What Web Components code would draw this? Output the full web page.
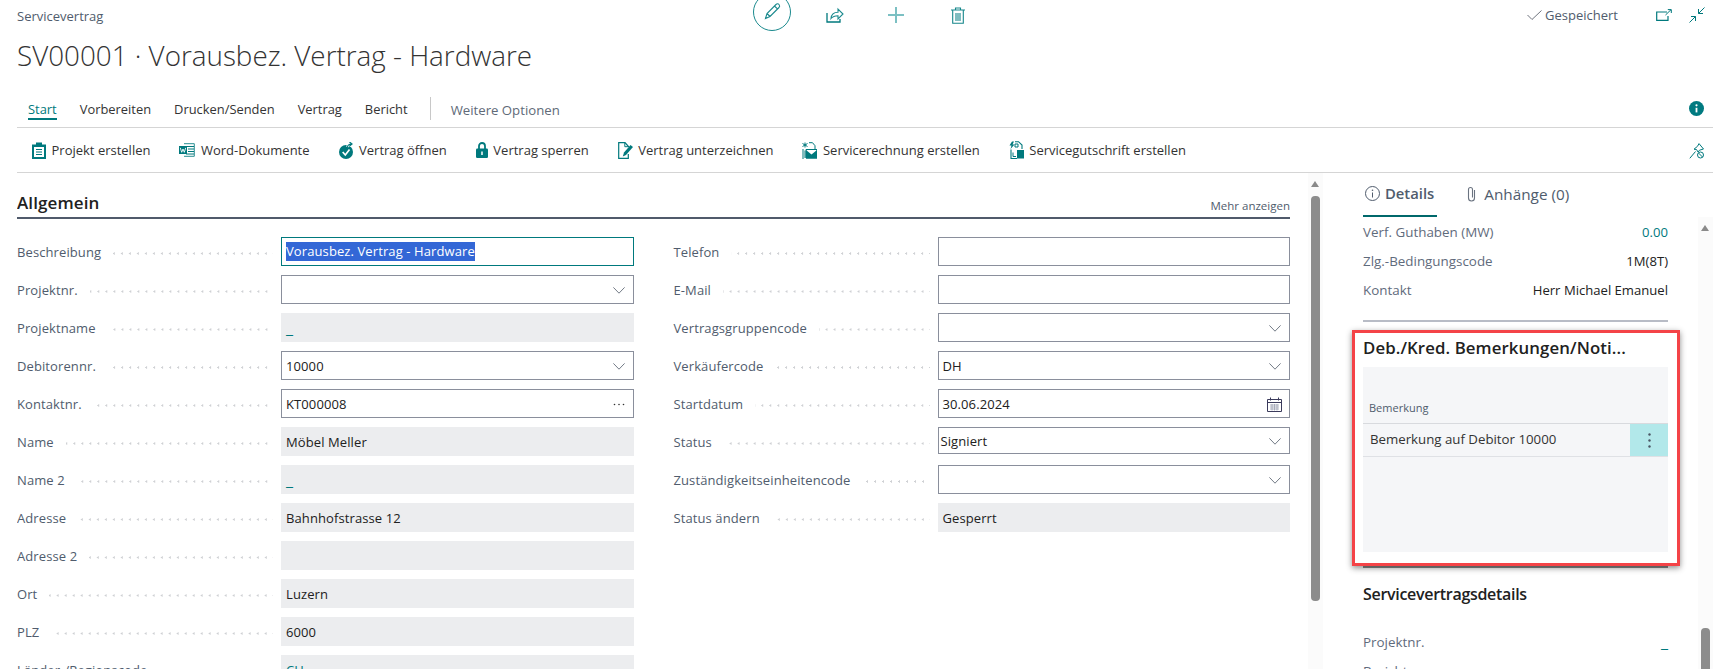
<!DOCTYPE html>
<html lang="de"><head><meta charset="utf-8"><title>Servicevertrag</title>
<style>
html,body{margin:0;height:100%;overflow:hidden;background:#fff}
body{font-family:"Open Sans","Liberation Sans",sans-serif;font-size:13px;color:#212121}
</style></head><body>
<sv-app>
  <sv-header slot="header" caption="Servicevertrag" heading="SV00001 · Vorausbez. Vertrag - Hardware"></sv-header>
  <sv-tabs slot="tabs">
    <sv-tab active>Start</sv-tab><sv-tab>Vorbereiten</sv-tab><sv-tab>Drucken/Senden</sv-tab><sv-tab>Vertrag</sv-tab><sv-tab>Bericht</sv-tab><sv-tab more>Weitere Optionen</sv-tab>
  </sv-tabs>
  <sv-actionbar slot="actions">
    <sv-action icon="clipboard">Projekt erstellen</sv-action>
    <sv-action icon="word">Word-Dokumente</sv-action>
    <sv-action icon="open">Vertrag öffnen</sv-action>
    <sv-action icon="lock">Vertrag sperren</sv-action>
    <sv-action icon="sign">Vertrag unterzeichnen</sv-action>
    <sv-action icon="invoice">Servicerechnung erstellen</sv-action>
    <sv-action icon="credit">Servicegutschrift erstellen</sv-action>
  </sv-actionbar>
  <sv-section slot="main" heading="Allgemein" more="Mehr anzeigen">
    <sv-col>
      <sv-field label="Beschreibung" value="Vorausbez. Vertrag - Hardware" kind="focus"></sv-field>
      <sv-field label="Projektnr." kind="select"></sv-field>
      <sv-field label="Projektname" value="_" kind="readonly" link></sv-field>
      <sv-field label="Debitorennr." value="10000" kind="select"></sv-field>
      <sv-field label="Kontaktnr." value="KT000008" kind="lookup"></sv-field>
      <sv-field label="Name" value="Möbel Meller" kind="readonly"></sv-field>
      <sv-field label="Name 2" value="_" kind="readonly" link></sv-field>
      <sv-field label="Adresse" value="Bahnhofstrasse 12" kind="readonly"></sv-field>
      <sv-field label="Adresse 2" kind="readonly"></sv-field>
      <sv-field label="Ort" value="Luzern" kind="readonly"></sv-field>
      <sv-field label="PLZ" value="6000" kind="readonly"></sv-field>
      <sv-field label="Länder-/Regionscode" value="CH" kind="readonly" link></sv-field>
    </sv-col>
    <sv-col>
      <sv-field label="Telefon" kind="input"></sv-field>
      <sv-field label="E-Mail" kind="input"></sv-field>
      <sv-field label="Vertragsgruppencode" kind="select"></sv-field>
      <sv-field label="Verkäufercode" value="DH" kind="select"></sv-field>
      <sv-field label="Startdatum" value="30.06.2024" kind="date"></sv-field>
      <sv-field label="Status" value="Signiert" kind="select" tight></sv-field>
      <sv-field label="Zuständigkeitseinheitencode" kind="select"></sv-field>
      <sv-field label="Status ändern" value="Gesperrt" kind="readonly"></sv-field>
    </sv-col>
  </sv-section>
  <sv-scrollbar slot="mainscroll" gap="9" len="405"></sv-scrollbar>
  <sv-sidebar slot="side">
    <sv-fact label="Verf. Guthaben (MW)" value="0.00" link></sv-fact>
    <sv-fact label="Zlg.-Bedingungscode" value="1M(8T)"></sv-fact>
    <sv-fact label="Kontakt" value="Herr Michael Emanuel"></sv-fact>
    <sv-notes slot="notes" heading="Deb./Kred. Bemerkungen/Noti..." column="Bemerkung" note="Bemerkung auf Debitor 10000"></sv-notes>
    <sv-fact slot="details" label="Projektnr." value="_" link></sv-fact>
    <sv-fact slot="details" label="Bericht" value=""></sv-fact>
  </sv-sidebar>
  <sv-scrollbar slot="sidescroll" inset gap="397" len="60"></sv-scrollbar>
</sv-app>
<script>
const T='#00797d';
const ICONS={
 pencil:[20,20,`<path d="M3.5 16.5 5 11.5 14 2.5c1-1 2.3-.8 3 0s.9 2 0 3L8 14.5zM5 11.5 8 14.5M12.5 4l3.2 3.2" fill="none" stroke="#1b8a8e" stroke-width="1.1"/>`],
 share:[18,16,`<path d="M1 6v9h13v-3" fill="none" stroke="${T}" stroke-width="1.3"/><path d="M5 11.5c.3-4 3-6.3 7-6.3V2l5 5-5 5V8.700c-3 0-5.400.8-7 2.800z" fill="none" stroke="#1b8a8e" stroke-width="1.1"/>`],
 plus:[16,16,`<path d="M8 0v16M0 8h16" stroke="#7cc0c3" stroke-width="2" fill="none"/>`],
 trash:[14,17,`<path d="M0 3h14M4.5 3V1h5v2M1.700 3v13.300h10.600V3M5 6v8M7 6v8M9 6v8" fill="none" stroke="#16878b" stroke-width="1.1"/>`],
 check:[15,10,`<path d="M.5 5 5 9.5 14.5.5" fill="none" stroke="#70757f" stroke-width="1"/>`],
 window:[16,12,`<path d="M11 3H.7v8.300H12V7" fill="none" stroke="${T}" stroke-width="1.2"/><path d="M9.500 6 15 .7M11.800.6H15.300V4" fill="none" stroke="${T}"/>`],
 collapse:[16,16,`<path d="M15.500.5 9.500 6.500M9.500 2v4.500H14M.5 15.500l6-6M2 9.500h4.500V14" fill="none" stroke="${T}" stroke-width="1"/>`],
 info:[15,15,`<circle cx="7.5" cy="7.5" r="7.5" fill="#007a80"/><circle cx="7.5" cy="4.300" r="1.1" fill="#fff"/><path d="M7.500 6.800v4.600" stroke="#fff" stroke-width="1.8"/>`],
 pin:[16,16,`<path d="M10 .6 14.500 6 10.500 7.200 9 9 7.500 6.500 5 6.200 8.500 3.300zM6.500 8.500.8 15.300" fill="none" stroke="${T}"/><circle cx="11.5" cy="12" r="3" fill="none" stroke="${T}"/><path d="M9.500 10l4 4" stroke="${T}"/>`],
 clipboard:[14,17,`<path d="M0 2.500h4V.5h6v2h4V17H0z" fill="${T}"/><path d="M2 5h10v10H2z" fill="#fff"/><path d="M4 7.500h6M4 10h6M4 12.500h6" stroke="${T}" stroke-width="1.2"/>`],
 word:[16,14,`<path d="M5 .7h10.300v12.600H5" fill="none" stroke="#2b8f93"/><path d="M7 3.500h8M9 6h6M9 8.500h6M7 11h8" stroke="${T}"/><rect x="0" y="3" width="8" height="8" fill="${T}"/><path d="M1.300 4.800 2.700 9.300 4 6 5.300 9.300 6.700 4.800" fill="none" stroke="#fff" stroke-width=".9"/>`],
 open:[15,17,`<circle cx="7" cy="10" r="7" fill="${T}"/><path d="M3.700 10 6.300 13 10.500 7.500" fill="none" stroke="#fff" stroke-width="1.7"/><path d="M8.500 5c.3-2.200 1.800-3 4-3M10.500 0 13 2l-2.500 2" fill="none" stroke="#fff" stroke-width="2.600"/><path d="M8.500 5c.3-2.200 1.800-3 4-3M10.500 0 13 2l-2.500 2" fill="none" stroke="${T}" stroke-width="1.200"/>`],
 lock:[12,16,`<path d="M3 7V4a3 3 0 0 1 6 0v3" fill="none" stroke="${T}" stroke-width="1.8"/><rect x="0" y="6.500" width="12" height="9.500" rx="1.2" fill="${T}"/><path d="M6 9.500v3.500" stroke="#fff" stroke-width="1.5"/>`],
 sign:[15,17,`<path d="M10.500 5V4.500L7 .7H.7v15.600h9.600V12" fill="none" stroke="${T}" stroke-width="1.2"/><path d="M6.800.7v4h3.700" fill="none" stroke="${T}"/><path d="M4.800 14.500 6 10.500 12.500 3l2.500 2-7 8z" fill="${T}"/>`],
 invoice:[15,17,`<path d="M3 .5v5M.5 1.500l5 3M5.500 1.500l-5 3" stroke="${T}"/><path d="M7 .7h3.500l2.500 3V7M1 7v10M3 8.500V16" fill="none" stroke="${T}"/><path d="M4 7.500h11V16H4z" fill="#fff" stroke="${T}"/><path d="M4 8l5.500 4.500L15 8v8.500H4z" fill="${T}"/>`],
 credit:[15,18,`<path d="M3 .5 .5 4.500h2L1.500 8 5.500 3.500h-2L5 .5z" fill="${T}"/><path d="M6 .7h3.500L13 4v4M2 8.500v9h6" fill="none" stroke="${T}" stroke-width="1.1"/><path d="M6 3h3v3H6z" fill="none" stroke="${T}"/><rect x="8" y="9" width="7" height="8.500" fill="${T}"/><path d="M4 11.500v4h3" fill="none" stroke="${T}"/>`],
 chevron:[12,7,`<path d="M.4.4 6 6.200 11.600.4" fill="none" stroke="#737b86" stroke-width="1"/>`],
 more:[12,3,`<circle cx="1.5" cy="1.5" r=".8" fill="#333"/><circle cx="6" cy="1.5" r=".8" fill="#333"/><circle cx="10.5" cy="1.5" r=".8" fill="#333"/>`],
 calendar:[15,15,`<path d="M.5 2.500h14v12H.5zM.5 5.500h14M3.500.5v3M11.500.5v3" fill="none" stroke="#3b3b5c"/><path d="M3 8h9M3 10h9M3 12h9M5 7v6.500M7.500 7v6.500M10 7v6.500" stroke="#9aa0b0" stroke-width=".8"/>`],
 infoline:[15,15,`<circle cx="7.5" cy="7.5" r="7" fill="none" stroke="#505c6d"/><path d="M7.500 6.500v5" stroke="#505c6d"/><circle cx="7.5" cy="4.300" r=".8" fill="#505c6d"/>`],
 clip:[9,16,`<path d="M7.500 4v8a3 3 0 0 1-6 0V3.500a2 2 0 0 1 4 0V11.500" fill="none" stroke="#6a7380" stroke-width="1.1"/>`],
 dots:[3,15,`<circle cx="1.5" cy="1.5" r="1.2" fill="#4a5563"/><circle cx="1.5" cy="7.5" r="1.2" fill="#4a5563"/><circle cx="1.5" cy="13.5" r="1.2" fill="#4a5563"/>`]
};
function def(name,css,html){
  customElements.define(name,class extends HTMLElement{
    constructor(){super();this.attachShadow({mode:'open'});}
    connectedCallback(){
      const a=n=>{const v=this.getAttribute(n);return v==null?'':v;};
      this.shadowRoot.innerHTML=`<style>${css}</style>`+(typeof html==='function'?html(a,this):html);
    }
  });
}
def('sv-icon',':host{display:inline-flex;flex:none;line-height:0}svg{display:block}',(a)=>{
  const i=ICONS[a('name')];return `<svg width="${i[0]}" height="${i[1]}" viewBox="0 0 ${i[0]} ${i[1]}">${i[2]}</svg>`;
});
def('sv-app',`:host{display:flex;flex-direction:column;height:669px;overflow:hidden}
.body{display:flex;flex:1;min-height:0;padding-right:21px}`,
`<slot name="header"></slot><slot name="tabs"></slot><slot name="actions"></slot>
<div class="body"><slot name="main"></slot><slot name="mainscroll"></slot><slot name="side"></slot><slot name="sidescroll"></slot></div>`);
def('sv-header',`:host{display:block;height:93px;padding-left:17px}
.top{display:flex;align-items:center;height:33px}
.cap{width:736px;font-size:13px;color:#505c6d;margin-top:-2px}
.circle{width:38px;height:38px;box-sizing:border-box;border:1px solid #1b8a8e;border-radius:50%;margin-top:-10px;display:flex;align-items:center;justify-content:center}
.share{margin-left:35px;margin-top:-4px}.plus{margin-left:44px;margin-top:-3px}.trash{margin-left:47px;margin-top:-3px}
.saved{margin-left:auto;display:flex;align-items:center;gap:3px;font-size:13px;color:#505c6d;margin-right:38px;margin-top:-3px}
.win{margin-right:17px;margin-top:-4px}.col{margin-right:29px;margin-top:-4px}
h1{margin:0;height:48px;line-height:45px;font-size:27.8px;font-weight:300;color:#333;white-space:nowrap}`,
(a)=>`<div class="top"><span class="cap">${a('caption')}</span>
<span class="circle"><sv-icon name="pencil"></sv-icon></span>
<sv-icon class="share" name="share"></sv-icon><sv-icon class="plus" name="plus"></sv-icon><sv-icon class="trash" name="trash"></sv-icon>
<span class="saved"><sv-icon name="check"></sv-icon>Gespeichert</span><sv-icon class="win" name="window"></sv-icon><sv-icon class="col" name="collapse"></sv-icon></div>
<h1>${a('heading')}</h1>`);
def('sv-tabs',`:host{display:flex;align-items:flex-start;gap:23px;height:34px;margin:0 21px 0 17px;padding:0 17px 0 11px;border-bottom:1px solid #d5d5d5;position:relative}
.i{position:absolute;right:9px;top:8px}`,`<slot></slot><sv-icon class="i" name="info"></sv-icon>`);
def('sv-tab',`:host{display:flex;align-items:center;height:23px;margin-top:4px;padding-top:3px;white-space:nowrap;color:#333;font-size:12.9px;box-sizing:border-box;border-bottom:2px solid transparent}
:host([active]){color:${T};border-bottom-color:${T}}
:host([more]){color:#606a78;font-size:13.2px;border-left:1px solid #c8c8c8;border-bottom:0;padding-left:20px;margin-left:-1px}`,`<slot></slot>`);
def('sv-actionbar',`:host{display:flex;align-items:center;gap:29px;height:44px;margin:0 21px 0 17px;padding:0 8px 0 15px;border-bottom:1px solid #d5d5d5;position:relative}
.p{position:absolute;right:8px;top:15px}`,`<slot></slot><sv-icon class="p" name="pin"></sv-icon>`);
def('sv-action',`:host{display:flex;align-items:center;gap:5.5px;white-space:nowrap;color:#333;font-size:13px}`,
(a)=>`<sv-icon name="${a('icon')}"></sv-icon><slot></slot>`);
def('sv-section',`:host{display:block;width:1273px;margin-left:17px;margin-right:18px;flex:none;height:100%;overflow:hidden}
.h{display:flex;align-items:center;justify-content:space-between;height:44px;border-bottom:2px solid #505a6b;margin-bottom:18px}
h2{margin:16px 0 0;font-size:17px;font-weight:600;color:#212121;letter-spacing:.1px;line-height:24px}
.m{font-size:11.5px;color:#505c6d;margin-top:20px}
.g{display:grid;grid-template-columns:1fr 1fr;gap:40px}`,
(a)=>`<div class="h"><h2>${a('heading')}</h2><span class="m">${a('more')}</span></div><div class="g"><slot></slot></div>`);
def('sv-col',`:host{display:flex;flex-direction:column;gap:9px}`,`<slot></slot>`);
def('sv-field',`:host{display:grid;grid-template-columns:264px 1fr;height:29px;font-size:13px;letter-spacing:.1px}
.l{display:flex;align-items:center;color:#505c6d;min-width:0;padding:0 8px 0 0}
.l span{white-space:nowrap}
.d{flex:1;height:3px;margin:3px 0 0 12px;background:radial-gradient(circle at 1.2px 1.5px,#cfd1d4 1px,transparent 1.2px) right/8px 3px repeat-x}
.v{display:flex;align-items:center;justify-content:space-between;box-sizing:border-box;padding:1px 8px 0 4px;border:1px solid #8a8f9c;color:#212121;white-space:nowrap}
.focus{border-color:${T}}.readonly{background:#ecedef;border-color:#ecedef}
.sel{background:#3367d6;color:#fff;line-height:19px;margin-top:-1px}
.link{color:${T}}.big{font-size:16px;line-height:18px}.tight{height:27px;margin-bottom:2px;padding-left:2px}`,
(a,el)=>{
 const k=a('kind');const ic=k==='select'?'<sv-icon name="chevron"></sv-icon>':k==='lookup'?'<sv-icon name="more"></sv-icon>':k==='date'?'<sv-icon name="calendar" style="margin-right:-1px"></sv-icon>':'';
 const val=a('value');
 const cl=(el.hasAttribute('link')?'link ':'')+(val==='_'?'big':'');
 const t=k==='focus'?`<span class="sel">${val}</span>`:`<span class="${cl}">${val}</span>`;
 return `<div class="l"><span>${a('label')}</span><i class="d"></i></div><div class="v ${k} ${el.hasAttribute('tight')?'tight':''}">${t}${ic}</div>`;
});
def('sv-scrollbar',`:host{display:block;width:15px;flex:none;background:#fbfbfb;box-sizing:border-box;padding:8px 3px 0}
:host([inset]){margin-top:44px}
.a{width:0;height:0;border:4.5px solid transparent;border-top:0;border-bottom:6px solid #8a8a8a}
.t{width:9px;background:#8c8c8c;border-radius:4px}`,(a)=>`<div class="a"></div><div class="t" style="margin-top:${+a('gap')}px;height:${a('len')}px"></div>`);
def('sv-sidebar',`:host{display:block;width:375px;flex:none;height:100%;overflow:hidden;box-sizing:border-box;padding:0 30px 0 40px}
.tabs{display:flex;height:44px;gap:28px}
.tab{display:flex;align-items:center;gap:5px;height:44px;box-sizing:border-box;font-size:15.3px;color:#505c6d;white-space:nowrap;padding:0 3px 2px 2px}
.on{font-weight:600;font-size:14.8px;border-bottom:2px solid #00686b}
.clip{margin-right:3px}
.rule{height:2px;background:#b8bcc6;margin-top:15px}
.under{height:2px;background:#8a8a8a}
h3{margin:12px 0 20px;font-size:16px;line-height:28px;font-weight:600;color:#212121;letter-spacing:-.3px}
.list{padding-top:1px}`,
`<div class="tabs"><span class="tab on"><sv-icon name="infoline"></sv-icon>Details</span><span class="tab"><sv-icon class="clip" name="clip"></sv-icon>Anhänge (0)</span></div>
<div class="list"><slot></slot></div><div class="rule"></div><slot name="notes"></slot><div class="under"></div><h3>Servicevertragsdetails</h3><slot name="details"></slot>`);
def('sv-fact',`:host{display:flex;align-items:center;justify-content:space-between;height:29px;box-sizing:border-box;padding-bottom:2px;font-size:13.1px;white-space:nowrap}
.l{color:#5f6b7c;font-size:13.4px}.link{color:${T}}.big{font-size:16px;line-height:18px}`,
(a,el)=>`<span class="l">${a('label')}</span><span class="${(el.hasAttribute('link')?'link ':'')+(a('value')==='_'?'big':'')}">${a('value')}</span>`);
def('sv-notes',`:host{display:block;margin:8px -12px 0 -11px;border:3px solid #f44347;padding:0 9px 11px 8px;background:#fff;box-shadow:0 2px 6px rgba(0,0,0,.45);position:relative}
h3{margin:0 0 4px;font-size:16.8px;line-height:30px;font-weight:600;color:#212121;white-space:nowrap;letter-spacing:.1px}
.p{height:185px;background:#f5f6f8}
.c{height:56px;box-sizing:border-box;padding:33px 0 0 6px;font-size:11px;line-height:16px;color:#505c6d}
.r{display:flex;justify-content:space-between;border-top:1px solid #d8dade;border-bottom:1px solid #dfe1e5;height:32px;font-size:13.25px;color:#333}
.r span{padding-left:7px;line-height:31px}
.b{width:38px;background:#b2e8ea;display:flex;align-items:center;justify-content:center}`,
(a)=>`<h3>${a('heading')}</h3><div class="p"><div class="c">${a('column')}</div><div class="r"><span>${a('note')}</span><div class="b"><sv-icon name="dots"></sv-icon></div></div></div>`);
</script>
</body></html>
